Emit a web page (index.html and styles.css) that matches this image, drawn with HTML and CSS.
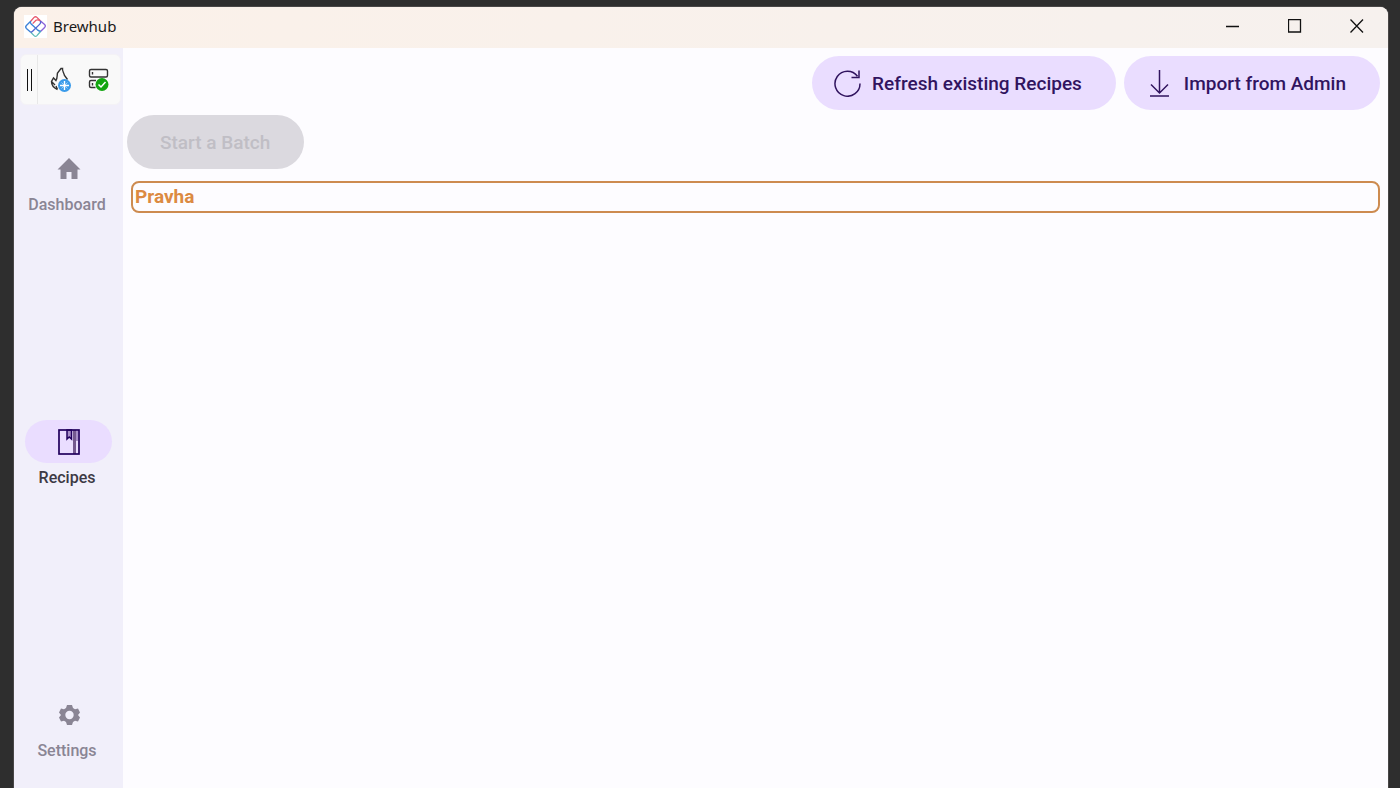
FILE: index.html
```html
<!DOCTYPE html>
<html lang="en">
<head>
    <meta charset="UTF-8">
    <meta name="viewport" content="width=device-width, initial-scale=1.0">
    <title>Brewhub</title>
    <link rel="stylesheet" href="styles.css">
</head>
<body>
    <div class="window">
        <!-- Title bar -->
        <header class="titlebar">
            <svg class="logo" viewBox="0 0 24 24" fill="none" stroke-width="1.4" stroke-linejoin="round">
                <rect width="24" height="24" fill="#fff" stroke="none"/>
                <path d="M7 6.500 10.500 2.500Q12 1 13.500 2.500L17 6" stroke="#e8586b"/>
                <path d="M17 6 21.500 10Q23 11.500 21.500 13L17.500 17" stroke="#8a62d8"/>
                <path d="M7 6.500 2.500 11Q1 12.500 2.500 14L7 18" stroke="#3e83d8"/>
                <path d="M7 18 10.500 21.500Q12 23 13.500 21.500L17.500 17" stroke="#62bdb8"/>
                <path d="M7 6.500Q6 8 7.500 9.500L14 15.500Q16 17 17.500 17" stroke="#3e83d8"/>
                <path d="M17 6Q18 8 16.500 9.500L9.500 16.500Q8 18 7 18" stroke="#5566d2"/>
                <path d="M9 9 12.500 5.500Q14 4.500 17 6" stroke="#e8586b"/>
            </svg>
            <span class="title">Brewhub</span>
            <div class="window-buttons">
                <button type="button" aria-label="Minimize">
                    <svg viewBox="0 0 14 14"><path d="M0 7.500H13"/></svg>
                </button>
                <button type="button" aria-label="Maximize">
                    <svg viewBox="0 0 14 14"><path d="M.5.5H12.500V13H.5Z"/></svg>
                </button>
                <button type="button" aria-label="Close">
                    <svg viewBox="0 0 14 14"><path d="M.5.5 13 13.500M13 .5.5 13.500"/></svg>
                </button>
            </div>
        </header>

        <div class="content">
            <aside class="sidebar">
                <!-- Debug toolbar -->
                <div class="toolbar">
                    <div class="grip"></div>
                    <button type="button" aria-label="Hot reload">
                        <svg viewBox="0 0 24 26" fill="none">
                            <path d="M8.500 22.500C5 21 2.500 18 2.500 14.500L4.500 11 7 13.500C8.500 11 8 8.500 8.500 6L12 1.500H13.500C13 4 15 6 15.500 8.500L18.500 12.500M2.500 14.500 6 18M8.500 22.500 7 19" stroke="#333" stroke-width="1.400"/>
                            <circle cx="15.500" cy="18.500" r="6.500" fill="#3a9bea"/>
                            <path d="M12.500 15.500 18.500 21.500M18.500 15.500 12.500 21.500" stroke="#9ccff7"/>
                            <path d="M15.500 14V23M11 18.500H20" stroke="#fff" stroke-width="1.400"/>
                        </svg>
                    </button>
                    <button type="button" aria-label="Connection status">
                        <svg viewBox="0 0 24 26" fill="none">
                            <rect x="2.500" y="2.500" width="18" height="7.500" rx="1.500" stroke="#333" stroke-width="1.400"/>
                            <path d="M5.500 5V7.500M5.500 16V18.500M9 13.500H4Q2.500 13.500 2.500 15V19Q2.500 20.500 4 20.500H8.500" stroke="#333" stroke-width="1.400"/>
                            <circle cx="15" cy="17.500" r="6.500" fill="#12a510"/>
                            <path d="M11.500 17.500 14 20 18.500 15" stroke="#fff" stroke-width="1.500"/>
                        </svg>
                    </button>
                </div>

                <nav class="nav">
                    <a class="nav-item" href="#dashboard">
                        <span class="nav-icon">
                            <svg viewBox="0 0 24 24" fill="currentColor"><path d="M12 1 23.500 12.500H20.500V22H14.500V15H9.500V22H3.500V12.500H.5Z"/></svg>
                        </span>
                        <span class="nav-label">Dashboard</span>
                    </a>
                    <a class="nav-item active" href="#recipes" aria-current="page">
                        <span class="nav-icon">
                            <svg class="book" viewBox="0 0 24 26" fill="none">
                                <path d="M17.500 1V25" stroke="#74598f" stroke-width="3"/>
                                <path d="M10 1H14.500V10L12.200 8 10 10Z" fill="#a78fc8" stroke="currentColor" stroke-width="1.500"/>
                                <path d="M20 2V12" stroke="#a78fc8" stroke-width="2"/>
                                <rect x="2" y="1" width="20" height="24" stroke="currentColor" stroke-width="1.700"/>
                            </svg>
                        </span>
                        <span class="nav-label">Recipes</span>
                    </a>
                    <a class="nav-item" href="#settings">
                        <span class="nav-icon">
                            <svg viewBox="0 0 24 24" fill="currentColor" fill-rule="evenodd"><path d="M10 2H15L16 5 18 6.200 21 5.500 23 9.500 21 12 23 14.500 21 18.500 18 17.800 16 19 15 22H10L9 19 7 17.800 4 18.500 2 14.500 4 12 2 9.500 4 5.500 7 6.200 9 5ZM12.500 7.800A4.200 4.200 0 1 0 12.500 16.200 4.200 4.200 0 1 0 12.500 7.800Z"/></svg>
                        </span>
                        <span class="nav-label">Settings</span>
                    </a>
                </nav>
            </aside>

            <main class="main">
                <div class="actions">
                    <button type="button" class="btn btn-icon">
                        <svg viewBox="0 0 27 27"><path d="M26 13.500A12.500 12.500 0 1 1 23.500 6.200M25 .5V7.500H17.500"/></svg>
                        Refresh existing Recipes
                    </button>
                    <button type="button" class="btn btn-icon">
                        <svg viewBox="0 0 27 27"><path d="M13.500 0V23M5 14.500 13.500 23 22 14.500M4 26H23"/></svg>
                        Import from Admin
                    </button>
                </div>
                <button type="button" class="btn btn-start" disabled>Start a Batch</button>

                <!-- Recipe list -->
                <ul class="recipes">
                    <li class="recipe">Pravha</li>
                </ul>
            </main>
        </div>
    </div>
</body>
</html>
```

FILE: styles.css
```css
* {
    box-sizing: border-box;
}

body {
    margin: 0;
    min-height: 100vh;
    display: flex;
    padding: 7px 12px 0 14px;
    background: #2e2e2e;
    font-family: Roboto, "Liberation Sans", sans-serif;
}

button {
    font-family: inherit;
    border: none;
    background: none;
    padding: 0;
}

svg {
    display: block;
}

.window {
    flex: 1;
    display: flex;
    flex-direction: column;
    border-radius: 8px 8px 0 0;
    overflow: hidden;
    background: #fdfcff;
    box-shadow: 0 0 0 1px #484646;
}

/* Title bar */
.titlebar {
    display: flex;
    align-items: center;
    height: 41px;
    padding: 0 0 3px 10px;
    background: linear-gradient(90deg, #fbf1e9, #f6f1ee);
}

.logo {
    width: 23px;
    height: 23px;
    margin-right: 6px;
}

.title {
    font-family: "Noto Sans", sans-serif;
    font-size: 15px;
    color: #1a1a1a;
}

.window-buttons {
    display: flex;
    margin-left: auto;
}

.window-buttons button {
    width: 62px;
    height: 38px;
    display: flex;
    align-items: center;
    justify-content: center;
}

.window-buttons svg {
    width: 14px;
    height: 14px;
    fill: none;
    stroke: #111;
    stroke-width: 1.3;
}

.content {
    flex: 1;
    display: flex;
}

/* Sidebar */
.sidebar {
    width: 109px;
    display: flex;
    flex-direction: column;
    padding: 6px 2px 27px 6px;
    background: #f1effa;
}

.toolbar {
    display: flex;
    align-items: center;
    height: 51px;
    margin-bottom: 42px;
    padding-right: 2px;
    background: #f9f9f9;
    border: 1px solid #f4f2f6;
    border-radius: 6px;
}

.toolbar button {
    width: 38px;
    display: flex;
    justify-content: center;
}

.toolbar svg {
    width: 24px;
    height: 26px;
}

.grip {
    width: 17px;
    height: 100%;
    margin-right: auto;
    display: flex;
    align-items: center;
    justify-content: center;
    border-right: 1px solid #e8e8e8;
}

.grip::before {
    content: "";
    width: 3px;
    height: 22px;
    border: solid #111;
    border-width: 0 1px;
}

.nav {
    flex: 1;
    display: flex;
    flex-direction: column;
    justify-content: space-between;
    padding-right: 7px;
}

.nav-item {
    display: flex;
    flex-direction: column;
    align-items: center;
    gap: 5px;
    color: #8a8594;
    text-decoration: none;
}

.nav-icon {
    width: 87px;
    height: 43px;
    display: flex;
    align-items: center;
    justify-content: center;
    border-radius: 22px;
    margin-left: 3px;
}

.nav-icon svg {
    width: 24px;
    height: 24px;
}

.nav-icon .book {
    height: 26px;
}

.nav-label {
    font-size: 16px;
    font-weight: 500;
    line-height: 20px;
}

.active .nav-icon {
    background: #eaddff;
    color: #21005d;
}

.active .nav-label {
    color: #3c3944;
}

/* Main area */
.main {
    flex: 1;
    padding: 8px 8px 8px 4px;
}

.actions {
    display: flex;
    justify-content: flex-end;
    gap: 8px;
    margin-bottom: 5px;
}

.btn {
    height: 54px;
    padding: 0 34px 0 33px;
    border-radius: 27px;
    background: #eaddff;
    color: #31145f;
    font-size: 19px;
    font-weight: 500;
}

.btn-icon {
    display: flex;
    align-items: center;
    gap: 11px;
    padding-left: 22px;
}

.btn svg {
    width: 27px;
    height: 27px;
    fill: none;
    stroke: #31145f;
    stroke-width: 1.5;
}

.btn:disabled {
    background: #dbd9df;
    color: #c0bec5;
}

.recipes {
    list-style: none;
    margin: 12px 0 0 4px;
    padding: 0;
}

.recipe {
    padding: 0 2px;
    border: 2px solid #cd8b50;
    border-radius: 8px;
    color: #dc8a42;
    font-size: 19px;
    font-weight: 700;
    line-height: 28px;
}
```
